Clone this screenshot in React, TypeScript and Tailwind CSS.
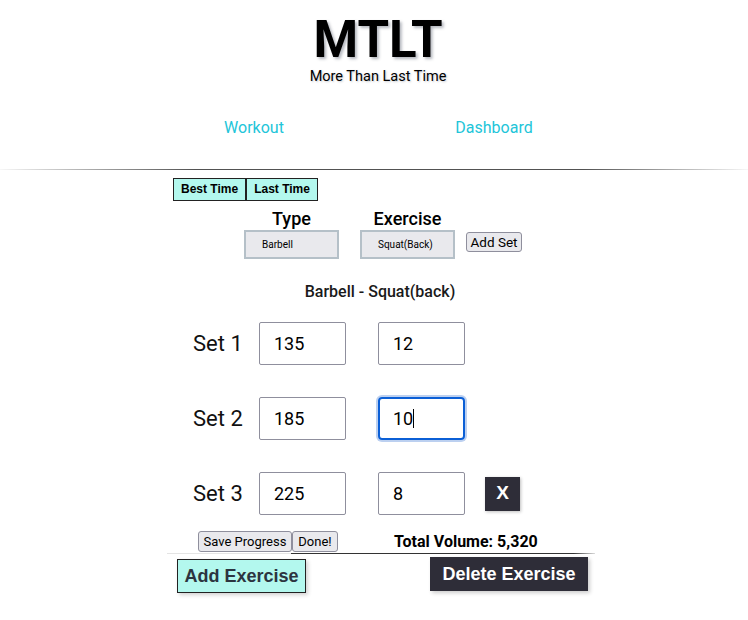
import React from "react";

const roboto = { fontFamily: "Roboto, 'Liberation Sans', sans-serif" };
const arialB = { fontFamily: "'Liberation Sans', Arial, sans-serif" };

function Box({ value, focused }: { value: string; focused?: boolean }) {
  if (focused) {
    return (
      <div className="w-[87px] h-[43px] border-2 border-[#0b5fd6] rounded-[4px] shadow-[0_0_0_2px_#bcd0f0] pl-[13px] flex items-center text-[18px] text-black">
        <span>{value}</span>
        <span className="inline-block w-px h-[19px] bg-black" />
      </div>
    );
  }
  return (
    <div className="w-[87px] h-[43px] border border-[#8f8f9d] rounded-[2px] pl-[14px] flex items-center text-[18px] text-black">
      {value}
    </div>
  );
}

function SetRow({ n, w, r, focused, x, className }: { n: number; w: string; r: string; focused?: boolean; x?: boolean; className?: string }) {
  return (
    <div className={"flex items-center ml-[33px] h-[43px] " + (className ?? "")}>
      <div className="w-[66px] text-[22px] text-[#111] leading-none">Set {n}</div>
      <Box value={w} />
      <div className="ml-[32px]">
        <Box value={r} focused={focused} />
      </div>
      {x && (
        <div
          className="ml-[20px] w-[35px] h-[34px] bg-[#2e2d38] text-white text-[19px] font-bold flex items-center justify-center shadow-[1px_1px_3px_rgba(0,0,0,0.25)]"
          style={arialB}
        >
          X
        </div>
      )}
    </div>
  );
}

export default function App() {
  return (
    <div className="w-[748px] h-[620px] bg-white overflow-hidden text-black" style={roboto}>
      <div className="ml-[8px] flex flex-col items-center">
        <h1 className="mt-[16px] h-[48px] text-[51px] leading-[48px] font-bold [text-shadow:2px_2px_3px_rgba(40,50,70,0.35)]">
          MTLT
        </h1>
        <div className="mt-[5px] h-[15px] text-[14.5px] leading-[15px] [text-shadow:1px_1px_2px_rgba(40,50,70,0.25)]">
          More Than Last Time
        </div>
      </div>

      <nav className="mt-[34px] h-[20px] flex justify-center gap-[120px] text-[16px] leading-[20px] text-[#22c5d9]">
        <div className="w-[120px] text-center">Workout</div>
        <div className="w-[120px] text-center">Dashboard</div>
      </nav>

      <div className="mt-[31px] h-px w-full bg-[linear-gradient(to_right,rgba(0,0,0,0.03),rgba(0,0,0,0.68)_26%,rgba(0,0,0,0.68)_78%,rgba(0,0,0,0.03))]" />

      <div className="ml-[160px] w-[440px] flex flex-col">
        <div className="mt-[8px] ml-[13px] flex text-[12px] font-bold leading-[21px]" style={arialB}>
          <div className="border border-[#222] bg-[#b3f8ee] px-[7px]">Best Time</div>
          <div className="border border-[#222] bg-[#b3f8ee] px-[7px]">Last Time</div>
        </div>

        <div className="mt-[7px] ml-[84px] flex items-end">
          <div className="w-[95px] flex flex-col items-center">
            <div className="h-[22px] text-[18px] leading-[22px] font-medium">Type</div>
            <div className="w-[95px] h-[29px] border-2 border-[#b5c0c8] bg-[#e9e9ed] pl-[16px] flex items-center text-[10px]">
              Barbell
            </div>
          </div>
          <div className="ml-[21px] w-[95px] flex flex-col items-center">
            <div className="h-[22px] text-[18px] leading-[22px] font-medium">Exercise</div>
            <div className="w-[95px] h-[29px] border-2 border-[#b5c0c8] bg-[#e9e9ed] pl-[16px] flex items-center text-[10px]">
              Squat(Back)
            </div>
          </div>
          <div className="ml-[11px] mb-[7px] w-[56px] h-[20px] border border-[#8f8f9d] rounded-[3px] bg-[#e9e9ed] text-[13.5px] flex items-center justify-center">
            Add Set
          </div>
        </div>

        <div className="mt-[23px] h-[20px] text-center text-[16px] leading-[20px] font-medium text-[#1a1a1a]">
          Barbell - Squat(back)
        </div>

        <SetRow n={1} w="135" r="12" className="mt-[20px]" />
        <SetRow n={2} w="185" r="10" focused className="mt-[32px]" />
        <SetRow n={3} w="225" r="8" x className="mt-[32px]" />

        <div className="mt-[16px] flex items-center h-[21px]">
          <div className="ml-[38px] w-[94px] h-[21px] border border-[#8f8f9d] rounded-[3px] bg-[#e9e9ed] text-[13px] flex items-center justify-center">
            Save Progress
          </div>
          <div className="w-[46px] h-[21px] border border-[#8f8f9d] rounded-[3px] bg-[#e9e9ed] text-[13px] flex items-center justify-center">
            Done!
          </div>
          <div className="ml-[56px] text-[16px] font-bold leading-[20px]">Total Volume: 5,320</div>
        </div>

        <div className="mt-px ml-[7px] w-[428px] h-px bg-[linear-gradient(to_right,#e4e4e4,#e4e4e4_29%,#333_29%,#333_95%,#dcdcdc)]" />

        <div className="flex items-start">
          <div
            className="mt-[5px] ml-[17px] w-[129px] h-[34px] border border-[#222] bg-[#b3f8ee] text-[#2c3440] text-[18px] font-bold flex items-center justify-center shadow-[2px_2px_4px_rgba(0,0,0,0.18)]"
            style={arialB}
          >
            Add Exercise
          </div>
          <div
            className="mt-[3px] ml-[124px] w-[158px] h-[34px] bg-[#2e2d38] text-white text-[18px] font-bold flex items-center justify-center shadow-[2px_2px_4px_rgba(0,0,0,0.2)]"
            style={arialB}
          >
            Delete Exercise
          </div>
        </div>
      </div>
    </div>
  );
}
